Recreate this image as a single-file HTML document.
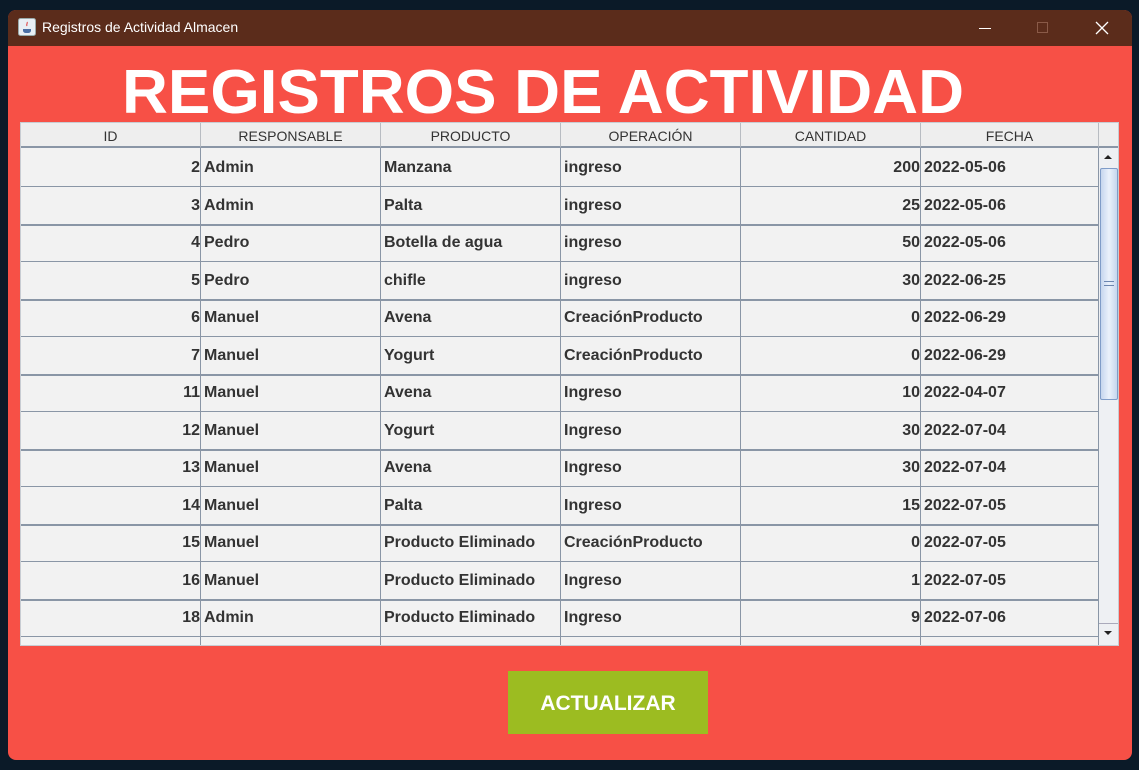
<!DOCTYPE html>
<html><head><meta charset="utf-8"><style>
*{margin:0;padding:0;box-sizing:border-box}
body{width:1139px;height:770px;background:#0b1a28;position:relative;overflow:hidden;font-family:"Liberation Sans",sans-serif}
.win{position:absolute;left:8px;top:10px;width:1124px;height:750px;background:#f75046;border-radius:8px;overflow:hidden}
.tb{position:absolute;left:0;top:0;width:100%;height:36px;background:#5b2c1b;color:#fff;font-size:14px}
.tbl{position:absolute;left:12px;top:112px;width:1099px;height:524px;background:#f2f2f2;border:1px solid #c8ccd2;overflow:hidden}
.hd{position:absolute;top:0;height:25px;background:#eeeeee;border-right:1px solid #b8bcc2;border-bottom:2px solid #8a96a6;font-size:14px;color:#333;text-align:center;line-height:26px}
.c{position:absolute;height:37px;font-size:16px;font-weight:bold;color:#333;line-height:37px;padding:0 3px;white-space:nowrap}
.vl{position:absolute;top:25px;width:1px;height:500px;background:#8a96a6}
.hl{position:absolute;left:0;width:1078px;background:#8a96a6}
</style></head><body>
<div class="win">
<div class="tb">
<svg style="position:absolute;left:10px;top:8px" width="18" height="18"><rect x="0.5" y="0.5" width="17" height="17" rx="2" fill="#e8eef4" stroke="#9aa"/><path d="M5 11h8v2a3 3 0 0 1-3 2H8a3 3 0 0 1-3-2z" fill="#4a6fa5"/><path d="M9 4c1 1-1 2 0 4" stroke="#d33" fill="none"/></svg>
<span style="position:absolute;left:34px;top:9px">Registros de Actividad Almacen</span>
<div style="position:absolute;left:971px;top:18px;width:12px;height:1px;background:#fff"></div>
<div style="position:absolute;left:1029px;top:12px;width:11px;height:11px;border:1px solid #8a5a48"></div>
<svg style="position:absolute;left:1087px;top:11px" width="14" height="14"><path d="M1 1L13 13M13 1L1 13" stroke="#fff" stroke-width="1.3"/></svg>
</div>
<svg style="position:absolute;left:0;top:40px" width="1124" height="80"><text x="114" y="63" textLength="842" lengthAdjust="spacingAndGlyphs" font-family="Liberation Sans" font-weight="bold" font-size="62" fill="#fff">REGISTROS DE ACTIVIDAD</text></svg>
<div class="tbl">
<div class="hd" style="left:0;width:180px">ID</div>
<div class="hd" style="left:180px;width:180px">RESPONSABLE</div>
<div class="hd" style="left:360px;width:180px">PRODUCTO</div>
<div class="hd" style="left:540px;width:180px">OPERACIÓN</div>
<div class="hd" style="left:720px;width:180px">CANTIDAD</div>
<div class="hd" style="left:900px;width:178px">FECHA</div>
<div class="hd" style="left:1078px;width:21px;border-right:none"></div>
<div class="vl" style="left:179px"></div><div class="vl" style="left:359px"></div><div class="vl" style="left:539px"></div><div class="vl" style="left:719px"></div><div class="vl" style="left:899px"></div><div class="vl" style="left:1077px"></div>
<div id="rows"></div>
<div style="position:absolute;left:1078px;top:25px;width:20px;height:498px;background:#eef0f3"></div>
<svg style="position:absolute;left:1081px;top:30px" width="12" height="8"><path d="M2 6L6 2L10 6z" fill="#222"/></svg>
<div style="position:absolute;left:1079px;top:45px;width:18px;height:232px;background:linear-gradient(90deg,#c6d6ee,#eaf1fb,#c6d6ee);border:1px solid #7f9cc8;border-radius:2px"></div>
<div style="position:absolute;left:1083px;top:158px;width:10px;height:5px;border-top:1px solid #6c86b0;border-bottom:1px solid #6c86b0"></div>
<div style="position:absolute;left:1078px;top:500px;width:20px;height:22px;border-top:1px solid #aab;background:#eef0f3"></div>
<svg style="position:absolute;left:1081px;top:506px" width="12" height="8"><path d="M2 2L6 6L10 2z" fill="#222"/></svg>
</div>
<div style="position:absolute;left:500px;top:661px;width:200px;height:63px;background:#9cbc21;color:#fff;font-weight:bold;font-size:21px;text-align:center;line-height:66px">ACTUALIZAR</div>
</div>
<script>
var d=[[2,"Admin","Manzana","ingreso",200,"2022-05-06"],[3,"Admin","Palta","ingreso",25,"2022-05-06"],[4,"Pedro","Botella de agua","ingreso",50,"2022-05-06"],[5,"Pedro","chifle","ingreso",30,"2022-06-25"],[6,"Manuel","Avena","CreaciónProducto",0,"2022-06-29"],[7,"Manuel","Yogurt","CreaciónProducto",0,"2022-06-29"],[11,"Manuel","Avena","Ingreso",10,"2022-04-07"],[12,"Manuel","Yogurt","Ingreso",30,"2022-07-04"],[13,"Manuel","Avena","Ingreso",30,"2022-07-04"],[14,"Manuel","Palta","Ingreso",15,"2022-07-05"],[15,"Manuel","Producto Eliminado","CreaciónProducto",0,"2022-07-05"],[16,"Manuel","Producto Eliminado","Ingreso",1,"2022-07-05"],[18,"Admin","Producto Eliminado","Ingreso",9,"2022-07-06"]];
var h="";
d.forEach(function(r,i){var t=26+i*37.5;
h+='<div class="c" style="left:0;top:'+t+'px;width:180px;text-align:right;padding-right:1px">'+r[0]+'</div>';
h+='<div class="c" style="left:180px;top:'+t+'px">'+r[1]+'</div>';
h+='<div class="c" style="left:360px;top:'+t+'px">'+r[2]+'</div>';
h+='<div class="c" style="left:540px;top:'+t+'px">'+r[3]+'</div>';
h+='<div class="c" style="left:720px;top:'+t+'px;width:180px;text-align:right;padding-right:1px">'+r[4]+'</div>';
h+='<div class="c" style="left:900px;top:'+t+'px">'+r[5]+'</div>';
h+='<div class="hl" style="top:'+Math.round(t+37)+'px;height:'+(i%2?2:1)+'px"></div>';});
document.getElementById("rows").innerHTML=h;
</script>
</body></html>
